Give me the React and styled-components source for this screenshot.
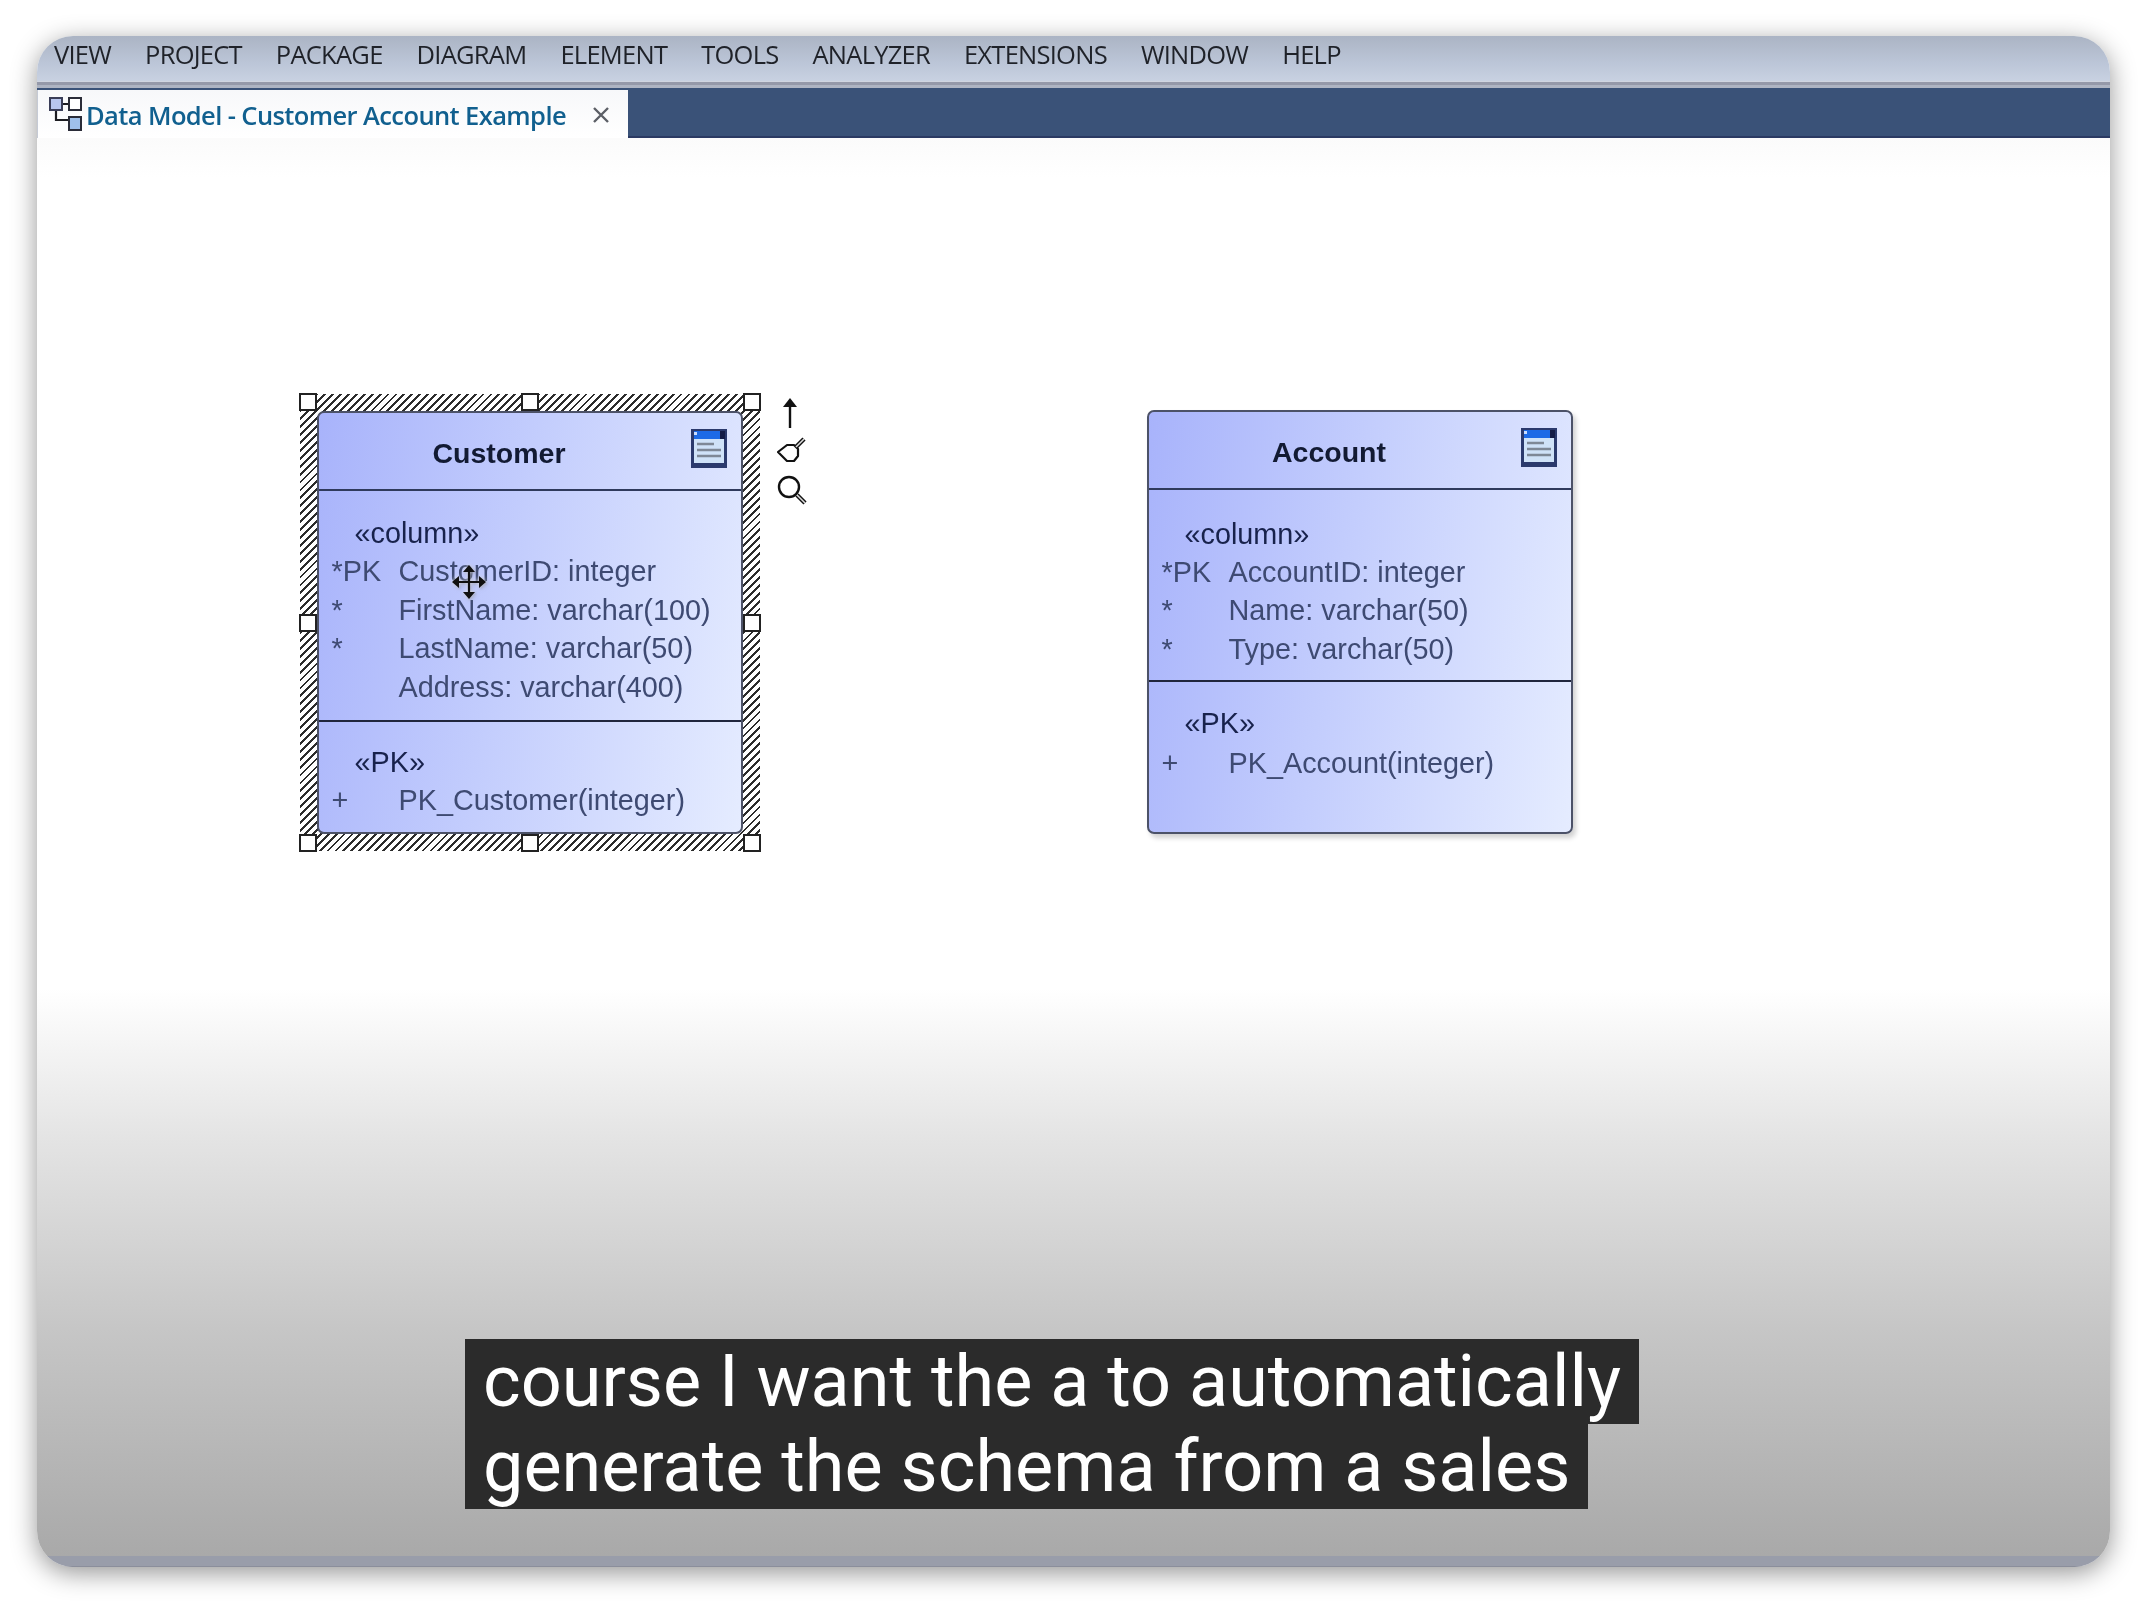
import React from "react";
import styled, { createGlobalStyle } from "styled-components";

const GlobalStyle = createGlobalStyle`
  html, body {
    margin: 0;
    padding: 0;
    background: #fff;
  }
`;

const Page = styled.div`
  width: 2146px;
  height: 1602px;
  box-sizing: border-box;
  padding: 36px 36px 35px 37px;
  background: #fff;
  overflow: hidden;
`;

const Window = styled.div`
  height: 100%;
  display: flex;
  flex-direction: column;
  border-radius: 36px;
  overflow: hidden;
  box-shadow: 0 6px 26px rgba(0, 0, 0, 0.42);
`;

const MenuBar = styled.nav`
  height: 46px;
  flex: none;
  display: flex;
  align-items: center;
  gap: 34px;
  padding: 0 0 0 17px;
  background: linear-gradient(180deg, #abb4c4 0%, #bcc6d8 60%, #c9d2e2 100%);
  border-bottom: 3px solid #9599a9;
  box-shadow: inset 0 -1px 0 #d0d5e0;
`;

const MenuItem = styled.span`
  font-family: "Open Sans", sans-serif;
  font-size: 25.5px;
  font-weight: 500;
  letter-spacing: -0.75px;
  color: #1f2229;
  margin-top: -10px;
  filter: blur(0.5px);
`;

const TabBar = styled.div`
  height: 48px;
  flex: none;
  display: flex;
  align-items: flex-end;
  background: #3a5278;
  border-top: 3px solid #aeb4c2;
  border-bottom: 2px solid #2b3a63;
`;

const Tab = styled.div`
  width: 591px;
  height: 48px;
  margin-bottom: -2px;
  box-sizing: border-box;
  display: flex;
  align-items: center;
  padding: 0 0 0 11px;
  background: linear-gradient(180deg, #f7f8fa 0%, #ffffff 100%);
  border-left: 1px solid #c5cad5;
`;

const TabTitle = styled.span`
  font-family: "Open Sans", sans-serif;
  font-size: 25.5px;
  font-weight: 600;
  letter-spacing: -0.6px;
  color: #11608f;
  margin: 2px 0 0 3px;
  white-space: nowrap;
  filter: blur(0.5px);
`;

const TabClose = styled.span`
  margin: 2px 0 0 26px;
  display: flex;
`;

const Canvas = styled.main`
  position: relative;
  flex: 1;
  background: linear-gradient(
    180deg,
    #fbfbfb 0,
    #ffffff 40px,
    #ffffff 60%,
    #e4e4e4 70.5%,
    #c6c6c6 84%,
    #a9a9a9 100%
  );
`;

const StatusStrip = styled.div`
  height: 10px;
  flex: none;
  background: #999daa;
  border-bottom: 1px solid #8b8e9b;
`;

const SelectionFrame = styled.div`
  position: absolute;
  left: 263px;
  top: 256px;
  width: 460px;
  height: 457px;
  box-sizing: border-box;
  padding: 17px;
  background: repeating-linear-gradient(135deg, #2c2c2c 0 2px, #ffffff 2px 5.6px);
  filter: blur(0.55px);
`;

const Handle = styled.span`
  position: absolute;
  left: ${({ $x }) => $x};
  top: ${({ $y }) => $y};
  width: 18px;
  height: 18px;
  box-sizing: border-box;
  transform: translate(-50%, -50%);
  background: #fff;
  border: 2.5px solid #222;
`;

const TableBox = styled.article`
  position: ${({ $free }) => ($free ? "absolute" : "relative")};
  left: ${({ $free }) => ($free ? "1110px" : "auto")};
  top: ${({ $free }) => ($free ? "272px" : "auto")};
  width: ${({ $free }) => ($free ? "426px" : "auto")};
  height: ${({ $free }) => ($free ? "424px" : "100%")};
  box-sizing: border-box;
  display: flex;
  flex-direction: column;
  background: linear-gradient(100deg, #a8b3fb 0%, #c3cdfd 45%, #e5ecff 100%);
  border: 2px solid #4c5268;
  border-radius: 7px;
  box-shadow: ${({ $free }) => ($free ? "3px 4px 5px rgba(0, 0, 0, 0.18)" : "none")};
  font-family: "Liberation Sans", Arial, sans-serif;
  filter: ${({ $free }) => ($free ? "blur(0.55px)" : "none")};
`;

const TableHeader = styled.header`
  height: 78px;
  flex: none;
  box-sizing: border-box;
  position: relative;
  display: flex;
  align-items: center;
  justify-content: center;
  padding: 5px 62px 0 0;
  border-bottom: 2px solid #2f3a5c;
`;

const TableTitle = styled.h2`
  margin: 0;
  font-size: 28.5px;
  font-weight: 700;
  color: #121a33;
`;

const TableIcon = styled.svg`
  position: absolute;
  right: 14px;
  top: 16px;
`;

const Compartment = styled.section`
  height: ${({ $height }) => $height || "auto"};
  flex: ${({ $height }) => ($height ? "none" : "1")};
  box-sizing: border-box;
  padding: ${({ $top }) => $top} 0 0 12.5px;
  border-bottom: ${({ $last }) => ($last ? "none" : "2px solid #20263d")};
`;

const Stereotype = styled.div`
  height: ${({ $height }) => $height || "38.4px"};
  line-height: 38.4px;
  padding-left: 23px;
  font-size: 28.8px;
  color: #18224c;
`;

const Row = styled.div`
  height: 38.4px;
  line-height: 38.4px;
  display: grid;
  grid-template-columns: 67px 1fr;
  font-size: 28.8px;
  color: #3e4a72;
  white-space: nowrap;
`;

const ActionColumn = styled.div`
  position: absolute;
  left: 740px;
  top: 260px;
  display: flex;
  flex-direction: column;
  align-items: center;
  gap: 9px;
  filter: blur(0.4px);
`;

const ArrowSvg = styled.svg`
  margin-right: 5px;
`;

const SearchSvg = styled.svg`
  margin-top: 3px;
`;

const MoveCursor = styled.svg`
  position: absolute;
  left: 414px;
  top: 426px;
  filter: drop-shadow(0 0 2px rgba(255, 255, 255, 0.95)) drop-shadow(1px 1px 1px rgba(0, 0, 0, 0.3));
`;

const Caption = styled.div`
  position: absolute;
  left: 428px;
  top: 1201px;
  display: flex;
  flex-direction: column;
  align-items: flex-start;
`;

const CaptionLine = styled.div`
  height: 85px;
  line-height: 85px;
  padding: 0 ${({ $right }) => $right} 0 18px;
  background: #2b2b2b;
  color: #fff;
  font-family: Roboto, sans-serif;
  font-size: 72px;
  white-space: nowrap;
`;

const menuItems = [
  "VIEW", "PROJECT", "PACKAGE", "DIAGRAM", "ELEMENT",
  "TOOLS", "ANALYZER", "EXTENSIONS", "WINDOW", "HELP",
];

const handles = [
  ["8px", "8px"], ["50%", "8px"], ["calc(100% - 8px)", "8px"],
  ["8px", "50%"], ["calc(100% - 8px)", "50%"],
  ["8px", "calc(100% - 8px)"], ["50%", "calc(100% - 8px)"], ["calc(100% - 8px)", "calc(100% - 8px)"],
];

const DiagramIcon = () => (
  <svg width="34" height="36" viewBox="0 0 34 36" style={{ flex: "none" }}>
    <path d="M12 8h8M7 14v10h12" fill="none" stroke="#1d1d22" strokeWidth="2.2" />
    <rect x="1" y="2" width="12" height="12" fill="#b8c6ee" stroke="#3a3e58" strokeWidth="2" />
    <rect x="20" y="2" width="12" height="12" fill="#fff" stroke="#2a2c38" strokeWidth="2" />
    <rect x="20" y="21" width="12" height="13" fill="#9fc0ea" stroke="#2a2c38" strokeWidth="2" />
  </svg>
);

const CloseIcon = () => (
  <svg width="18" height="18" viewBox="0 0 18 18">
    <path d="M2 2l14 14M16 2L2 16" stroke="#5c5f66" strokeWidth="2.4" />
  </svg>
);

const TableGlyph = () => (
  <TableIcon width="36" height="39" viewBox="0 0 36 39">
    <rect x="0" y="0" width="36" height="39" fill="#2b3a6d" />
    <rect x="3" y="2" width="26" height="8" fill="#1d6ae6" />
    <rect x="3" y="3" width="3" height="3" fill="#c8dcff" />
    <rect x="29" y="2" width="5" height="8" fill="#141c46" />
    <rect x="3" y="10" width="30" height="24" fill="#cfe2f8" />
    <path d="M6 15h17M6 21h24M6 27h24" stroke="#7e8896" strokeWidth="2.4" />
  </TableIcon>
);

const ArrowAction = () => (
  <ArrowSvg width="16" height="30" viewBox="0 0 16 30">
    <path d="M8 30V6" stroke="#111" strokeWidth="2.4" />
    <path d="M8 0l7 9H1z" fill="#111" />
  </ArrowSvg>
);

const KeyAction = () => (
  <svg width="30" height="26" viewBox="0 0 30 26">
    <path
      d="M1 15l9-7h7l4 4v7l-4 5h-7l-4-4z"
      fill="#fff"
      stroke="#111"
      strokeWidth="2.2"
      strokeLinejoin="round"
    />
    <path d="M19 10l8-8" stroke="#111" strokeWidth="4.5" />
    <path d="M19 10l8-8" stroke="#ddd" strokeWidth="1.6" />
  </svg>
);

const SearchAction = () => (
  <SearchSvg width="30" height="30" viewBox="0 0 30 30">
    <circle cx="12" cy="12" r="10" fill="#fff" stroke="#111" strokeWidth="2.4" />
    <path d="M20 20l8 8" stroke="#111" strokeWidth="4.5" />
    <path d="M20 20l8 8" stroke="#ddd" strokeWidth="1.6" />
  </SearchSvg>
);

const MoveGlyph = () => (
  <MoveCursor width="36" height="36" viewBox="0 0 36 36">
    <path d="M18 6v24M6 18h24" stroke="#111" strokeWidth="2.2" />
    <path d="M18 1l6 7H12zM18 35l6-7H12zM1 18l7-6v12zM35 18l-7-6v12z" fill="#111" />
  </MoveCursor>
);

const TableRows = ({ rows }) =>
  rows.map(([marker, text]) => (
    <Row key={text}>
      <span>{marker}</span>
      <span>{text}</span>
    </Row>
  ));

const Table = ({ name, free, columns, pk, columnsHeight, columnsTop, pkTop, pkHeight }) => (
  <TableBox $free={free}>
    <TableHeader>
      <TableTitle>{name}</TableTitle>
      <TableGlyph />
    </TableHeader>
    <Compartment $height={columnsHeight} $top={columnsTop}>
      <Stereotype>«column»</Stereotype>
      <TableRows rows={columns} />
    </Compartment>
    <Compartment $last $top={pkTop}>
      <Stereotype $height={pkHeight}>«PK»</Stereotype>
      <TableRows rows={pk} />
    </Compartment>
  </TableBox>
);

const App = () => (
  <>
    <GlobalStyle />
    <Page>
      <Window>
        <MenuBar>
          {menuItems.map((item) => (
            <MenuItem key={item}>{item}</MenuItem>
          ))}
        </MenuBar>
        <TabBar>
          <Tab>
            <DiagramIcon />
            <TabTitle>Data Model - Customer Account Example</TabTitle>
            <TabClose>
              <CloseIcon />
            </TabClose>
          </Tab>
        </TabBar>
        <Canvas>
          <SelectionFrame>
            <Table
              name="Customer"
              columnsHeight="230.5px"
              columnsTop="23px"
              pkTop="21px"
              columns={[
                ["*PK", "CustomerID: integer"],
                ["*", "FirstName: varchar(100)"],
                ["*", "LastName: varchar(50)"],
                ["", "Address: varchar(400)"],
              ]}
              pk={[["+", "PK_Customer(integer)"]]}
            />
            {handles.map(([x, y]) => (
              <Handle key={x + y} $x={x} $y={y} />
            ))}
          </SelectionFrame>
          <ActionColumn>
            <ArrowAction />
            <KeyAction />
            <SearchAction />
          </ActionColumn>
          <MoveGlyph />
          <Table
            free
            name="Account"
            columnsHeight="192px"
            columnsTop="24.5px"
            pkTop="22px"
            pkHeight="39.5px"
            columns={[
              ["*PK", "AccountID: integer"],
              ["*", "Name: varchar(50)"],
              ["*", "Type: varchar(50)"],
            ]}
            pk={[["+", "PK_Account(integer)"]]}
          />
          <Caption>
            <CaptionLine $right="18px">course I want the a to automatically</CaptionLine>
            <CaptionLine $right="18px">generate the schema from a sales</CaptionLine>
          </Caption>
        </Canvas>
        <StatusStrip />
      </Window>
    </Page>
  </>
);

export default App;
